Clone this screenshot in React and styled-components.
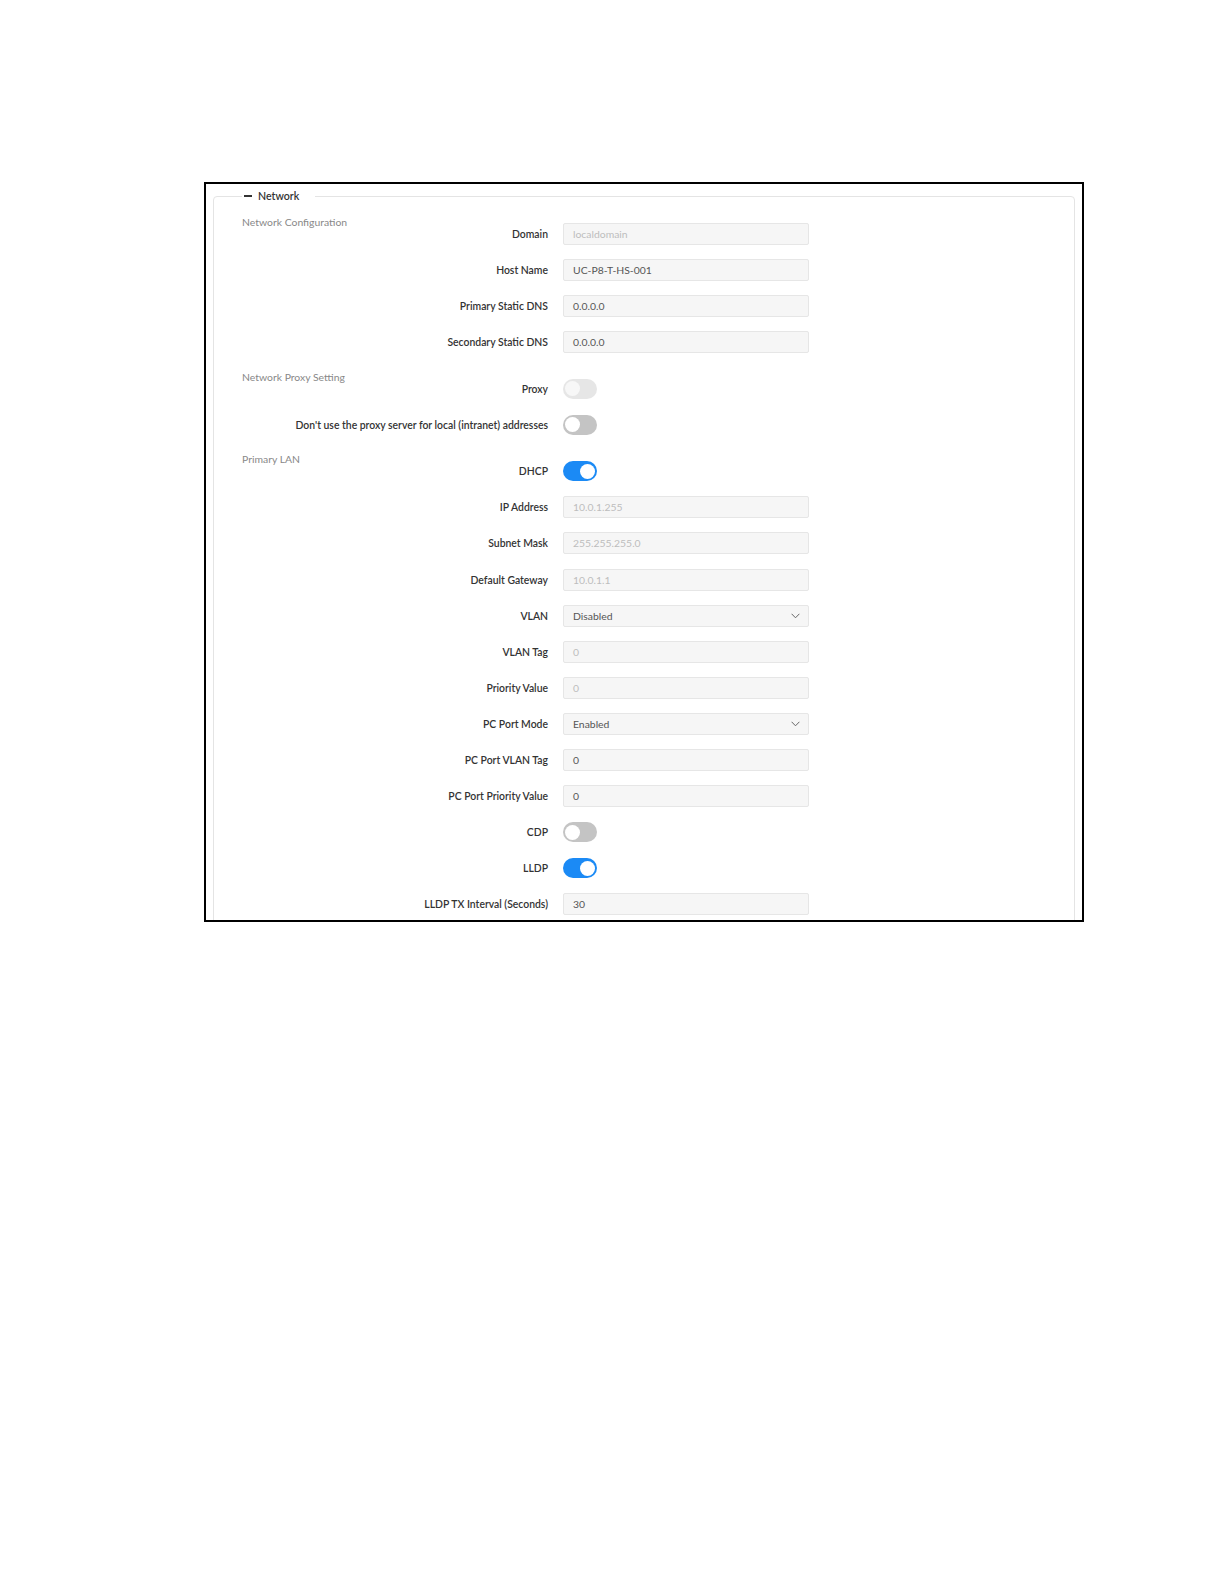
import React from "react";
import styled, { createGlobalStyle } from "styled-components";

const GlobalStyle = createGlobalStyle`
  html, body { margin: 0; padding: 0; background: #ffffff; }
  body { font-family: Lato, "Open Sans", "Liberation Sans", sans-serif; }
  * { box-sizing: border-box; }
`;

const Page = styled.div`
  padding: 182px 0 0 204px;
  min-height: 1584px;
`;

const Frame = styled.div`
  width: 880px;
  height: 740px;
  border: 2px solid #000;
  overflow: hidden;
  padding: 5px 7px 0 7px;
  background: #fff;
`;

const Fieldset = styled.fieldset`
  margin: 0;
  border: 1px solid #e4e4e4;
  border-radius: 4px;
  padding: 12px 0 40px 28px;
  min-width: 0;
`;

const Legend = styled.legend`
  padding: 0 16px 0 2px;
  display: flex;
  align-items: center;
  gap: 6px;
  font-size: 10.6px;
  line-height: 14px;
  font-weight: 600;
  color: #333;
`;

const Dash = styled.span`
  display: inline-block;
  width: 8px;
  height: 2px;
  background: #333;
`;

const Sections = styled.div`
  display: flex;
  flex-direction: column;
  gap: 16.5px;
`;

const SectionTitle = styled.div`
  font-size: 10.4px;
  line-height: 14px;
  color: #888;
  margin-bottom: -6px;
`;

const Grid = styled.div`
  display: grid;
  grid-template-columns: 306px 246px;
  column-gap: 15px;
  row-gap: 14.08px;
  align-items: center;
`;

const Label = styled.div`
  justify-self: end;
  text-align: right;
  font-size: 10.4px;
  line-height: 22px;
  font-weight: 600;
  color: #333;
  white-space: nowrap;
`;

const Field = styled.div`
  height: 22px;
  border: 1px solid #e6e6e6;
  background: #f6f6f6;
  border-radius: 2px;
  padding: 0 8px 0 9px;
  display: flex;
  align-items: center;
  justify-content: space-between;
  font-size: 10.4px;
  color: ${(p) => (p.$muted ? "#bdbdbd" : "#555")};
`;

const Track = styled.div`
  width: 34px;
  height: 20px;
  border-radius: 10px;
  padding: 0 2px;
  display: flex;
  align-items: center;
  justify-content: ${(p) => (p.$on ? "flex-end" : "flex-start")};
  background: ${(p) =>
    p.$on ? "#1b8af5" : p.$disabled ? "#e6e6e6" : "#c4c4c4"};
`;

const Knob = styled.span`
  width: 15px;
  height: 15px;
  border-radius: 50%;
  background: ${(p) => (p.$disabled ? "#f7f7f7" : "#ffffff")};
`;

const Chevron = () => (
  <svg width="9" height="6" viewBox="0 0 9 6" fill="none">
    <path d="M0.6 0.8 L4.5 4.8 L8.4 0.8" stroke="#666" strokeWidth="1" />
  </svg>
);

const sections = [
  {
    title: "Network Configuration",
    rows: [
      { label: "Domain", type: "input", value: "localdomain", muted: true },
      { label: "Host Name", type: "input", value: "UC-P8-T-HS-001" },
      { label: "Primary Static DNS", type: "input", value: "0.0.0.0" },
      { label: "Secondary Static DNS", type: "input", value: "0.0.0.0" },
    ],
  },
  {
    title: "Network Proxy Setting",
    rows: [
      { label: "Proxy", type: "toggle", on: false, disabled: true },
      {
        label: "Don't use the proxy server for local (intranet) addresses",
        type: "toggle",
        on: false,
      },
    ],
  },
  {
    title: "Primary LAN",
    rows: [
      { label: "DHCP", type: "toggle", on: true },
      { label: "IP Address", type: "input", value: "10.0.1.255", muted: true },
      { label: "Subnet Mask", type: "input", value: "255.255.255.0", muted: true },
      { label: "Default Gateway", type: "input", value: "10.0.1.1", muted: true },
      { label: "VLAN", type: "select", value: "Disabled" },
      { label: "VLAN Tag", type: "input", value: "0", muted: true },
      { label: "Priority Value", type: "input", value: "0", muted: true },
      { label: "PC Port Mode", type: "select", value: "Enabled" },
      { label: "PC Port VLAN Tag", type: "input", value: "0" },
      { label: "PC Port Priority Value", type: "input", value: "0" },
      { label: "CDP", type: "toggle", on: false },
      { label: "LLDP", type: "toggle", on: true },
      { label: "LLDP TX Interval (Seconds)", type: "input", value: "30" },
    ],
  },
];

function Control({ row }) {
  if (row.type === "toggle") {
    return (
      <div>
        <Track $on={row.on} $disabled={row.disabled}>
          <Knob $disabled={row.disabled} />
        </Track>
      </div>
    );
  }
  if (row.type === "select") {
    return (
      <Field>
        <span>{row.value}</span>
        <Chevron />
      </Field>
    );
  }
  return (
    <Field $muted={row.muted}>
      <span>{row.value}</span>
    </Field>
  );
}

export default function App() {
  return (
    <>
      <GlobalStyle />
      <Page>
        <Frame>
          <Fieldset>
            <Legend>
              <Dash />
              Network
            </Legend>
            <Sections>
              {sections.map((s) => (
                <div key={s.title}>
                  <SectionTitle>{s.title}</SectionTitle>
                  <Grid>
                    {s.rows.map((r) => (
                      <React.Fragment key={r.label}>
                        <Label>{r.label}</Label>
                        <Control row={r} />
                      </React.Fragment>
                    ))}
                  </Grid>
                </div>
              ))}
            </Sections>
          </Fieldset>
        </Frame>
      </Page>
    </>
  );
}
